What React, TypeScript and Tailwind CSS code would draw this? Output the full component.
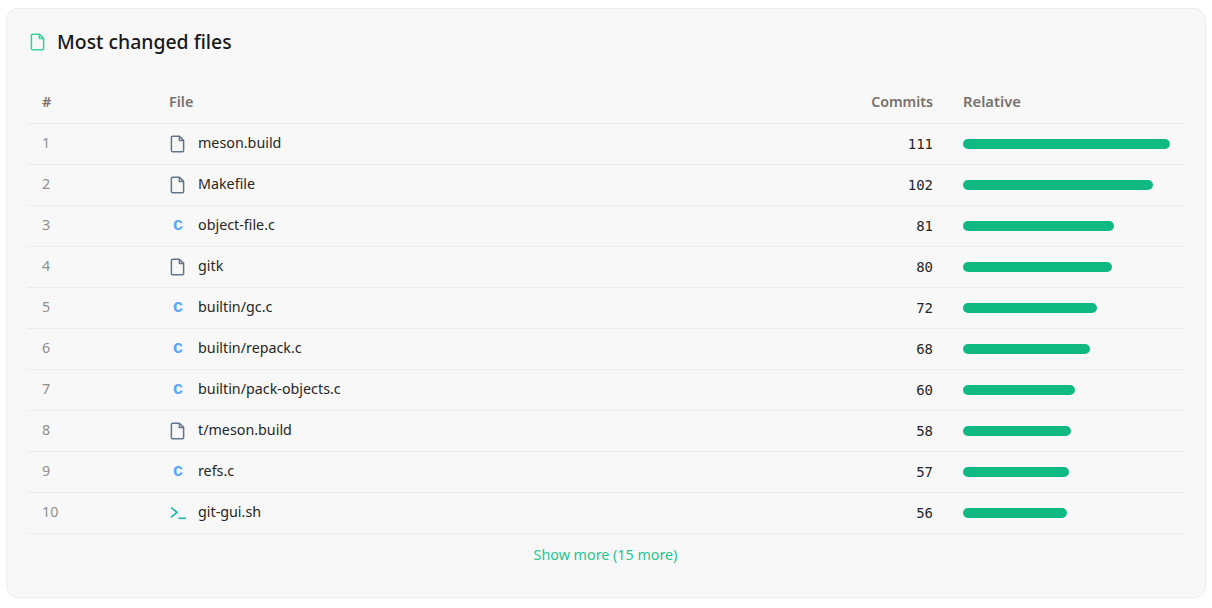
import React from 'react';

type Kind = 'file' | 'c' | 'sh';

interface Row {
    name: string;
    commits: number;
    kind: Kind;
}

const rows: Row[] = [
    { name: 'meson.build', commits: 111, kind: 'file' },
    { name: 'Makefile', commits: 102, kind: 'file' },
    { name: 'object-file.c', commits: 81, kind: 'c' },
    { name: 'gitk', commits: 80, kind: 'file' },
    { name: 'builtin/gc.c', commits: 72, kind: 'c' },
    { name: 'builtin/repack.c', commits: 68, kind: 'c' },
    { name: 'builtin/pack-objects.c', commits: 60, kind: 'c' },
    { name: 't/meson.build', commits: 58, kind: 'file' },
    { name: 'refs.c', commits: 57, kind: 'c' },
    { name: 'git-gui.sh', commits: 56, kind: 'sh' },
];

const FileIcon = ({ className }: { className: string }) => (
    <svg viewBox="0 0 16 18" fill="none" stroke="currentColor" strokeWidth="1.5" strokeLinejoin="round" className={className}>
        <path d="M2.8 1.2h6.6l4.2 4.2v10a1.4 1.4 0 0 1-1.4 1.4H2.8a1.4 1.4 0 0 1-1.4-1.4V2.6a1.4 1.4 0 0 1 1.4-1.4z" />
        <path d="M9.4 1.2v4.2h4.2" />
    </svg>
);

const RowIcon = ({ kind }: { kind: Kind }) => {
    if (kind === 'c') {
        return <span className="w-4 pb-[4px] text-center text-[18px] font-bold leading-none text-[#60a5fa] font-['Liberation_Sans',sans-serif]">c</span>;
    }
    if (kind === 'sh') {
        return (
            <svg viewBox="0 0 16 14" fill="none" stroke="currentColor" strokeWidth="1.6" className="h-[14px] w-4 text-[#14b8a6]">
                <path d="M1 1.5l6 4.8-6 5" />
                <path d="M8.5 12.3H16" />
            </svg>
        );
    }
    return <FileIcon className="h-[18px] w-4 text-[#64748b]" />;
};

export default function App() {
    return (
        <div className="bg-white pt-2 pl-1.5 pr-1.5 h-[608px] font-['Noto_Sans',sans-serif]">
            <div className="h-[590px] rounded-xl border border-[#ececec] bg-[#f8f8f8] pl-5 pr-[21px]">
                {/* Title */}
                <div className="flex h-[72px] items-center gap-[11px] pl-[3px] pb-[6px]">
                    <FileIcon className="h-[18px] w-4 text-[#34d399]" />
                    <h2 className="text-[19.4px] font-medium text-[#171717]">Most changed files</h2>
                </div>

                {/* Table */}
                <div className="flex h-[43px] items-center border-b border-[#ececec] text-[14.4px] font-semibold leading-5 text-[#78716c]">
                    <div className="w-[142px] pl-[15px]">#</div>
                    <div className="flex-1">File</div>
                    <div className="w-[100px] text-right text-[14.2px] leading-5">Commits</div>
                    <div className="w-[251px] pb-[2px] pl-[30px] text-[14.8px] leading-5">Relative</div>
                </div>
                {rows.map((row, index) => (
                    <div key={row.name} className="flex h-[41px] items-center border-b border-[#ececec] text-[14.3px]">
                        <div className="w-[142px] pb-[2px] pl-[15px] text-[#8f8f8f]">{index + 1}</div>
                        <div className="flex flex-1 items-center gap-3 pl-[1px] text-[#262626]">
                            <RowIcon kind={row.kind} />
                            <span className="pb-[2px]">{row.name}</span>
                        </div>
                        <div className="w-[100px] text-right text-sm text-[#262626] font-['DejaVu_Sans_Mono',monospace]">{row.commits}</div>
                        <div className="w-[251px] pl-[30px]">
                            <div className="h-2.5 rounded-full bg-[#10b981]" style={{ width: `${(row.commits / 111) * 207}px` }} />
                        </div>
                    </div>
                ))}

                <div className="flex justify-center pt-[10px] text-[14.3px] text-[#26c48f]">Show more (15 more)</div>
            </div>
        </div>
    );
}
